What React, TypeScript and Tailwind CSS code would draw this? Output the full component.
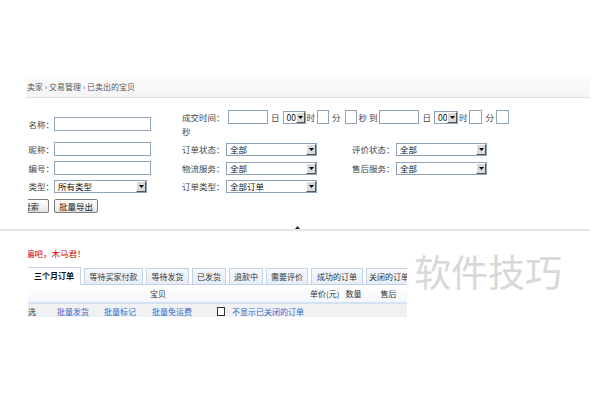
import React from "react";

const Inp = ({ cls }: { cls: string }) => (
  <span className={`inline-block h-[14px] shrink-0 border border-[#8fa3b8] bg-white ${cls}`} />
);

const Sel = ({ cls, text }: { cls: string; text: string }) => (
  <span
    className={`inline-flex h-[13px] shrink-0 items-center justify-between border border-[#8fa3b8] bg-white ${cls}`}
  >
    <span className="pl-[3px] leading-none text-[#111]">{text}</span>
    <span className="flex h-[11px] w-[10px] items-center justify-center border border-b-[#555] border-l-white border-r-[#555] border-t-white bg-[#dadada]">
      <svg width="5" height="3" viewBox="0 0 5 3">
        <path d="M0 0h5L2.5 3z" fill="#000" />
      </svg>
    </span>
  </span>
);

const Btn = ({ text, cls }: { text: string; cls?: string }) => (
  <span
    className={`inline-flex h-[14px] items-center rounded-[2px] border border-[#7c7c7c] bg-gradient-to-b from-white to-[#e4e4e4] leading-none text-[#222] ${cls ?? "px-[4px]"}`}
  >
    {text}
  </span>
);

const tabs: { t: string; w: string; active?: boolean }[] = [
  { t: "三个月订单", w: "w-[54px]", active: true },
  { t: "等待买家付款", w: "w-[59px]" },
  { t: "等待发货", w: "w-[43px]" },
  { t: "已发货", w: "w-[34px]" },
  { t: "退款中", w: "w-[34px]" },
  { t: "需要评价", w: "w-[42px]" },
  { t: "成功的订单", w: "w-[52px]" },
  { t: "关闭的订单", w: "w-[46px]" },
];

export default function App() {
  return (
    <div className="relative h-[400px] w-[600px] overflow-hidden bg-white font-['Noto_Sans_CJK_SC',sans-serif] text-[#444]">
      <div className="h-[77px]" />
      {/* breadcrumb */}
      <div className="ml-[26px] flex h-[21px] w-[564px] items-center overflow-hidden border-b border-[#e2e2e2] bg-gradient-to-b from-[#fcfcfc] to-[#f4f4f4] text-[8px] text-[#555]">
        <span className="ml-[1px] leading-none">卖家 › 交易管理 › 已卖出的宝贝</span>
      </div>

      {/* form */}
      <div className="ml-[28px] mt-[12px] w-[562px] overflow-hidden text-[8.5px] leading-none">
        <div className="-ml-[40px]">
          {/* row 1 */}
          <div className="flex h-[28px] items-center">
            <div className="w-[66px] shrink-0 text-right">宝贝名称：</div>
            <div className="w-[128px] shrink-0">
              <Inp cls="w-[97px]" />
            </div>
            <div className="flex flex-col">
              <div className="flex h-[14px] items-center">
                <span className="w-[46px] shrink-0">成交时间：</span>
                <Inp cls="w-[40px] h-[13px]" />
                <span className="ml-[3px]">日</span>
                <Sel cls="ml-[3px] w-[23px]" text="00" />
                <span className="ml-[1px]">时</span>
                <Inp cls="ml-[2px] w-[12px] h-[13px]" />
                <span className="ml-[3px]">分</span>
                <Inp cls="ml-[4px] w-[12px] h-[13px]" />
                <span className="ml-[2px] whitespace-nowrap">秒 到</span>
                <Inp cls="ml-[2px] w-[40px] h-[13px]" />
                <span className="ml-[3px]">日</span>
                <Sel cls="ml-[3px] w-[24px]" text="00" />
                <span className="ml-[1px]">时</span>
                <Inp cls="ml-[2px] w-[13px] h-[13px]" />
                <span className="ml-[3px]">分</span>
                <Inp cls="ml-[2px] w-[13px] h-[13px]" />
              </div>
              <div className="flex h-[14px] items-center">秒</div>
            </div>
          </div>
          {/* row 2 */}
          <div className="flex h-[22px] items-center">
            <div className="w-[66px] shrink-0 text-right">买家昵称：</div>
            <div className="w-[128px] shrink-0">
              <Inp cls="w-[97px]" />
            </div>
            <span className="w-[44px] shrink-0">订单状态：</span>
            <div className="w-[126px] shrink-0">
              <Sel cls="w-[91px]" text="全部" />
            </div>
            <span className="w-[44px] shrink-0">评价状态：</span>
            <Sel cls="w-[91px]" text="全部" />
          </div>
          {/* row 3 */}
          <div className="flex h-[16px] items-center">
            <div className="w-[66px] shrink-0 text-right">订单编号：</div>
            <div className="w-[128px] shrink-0">
              <Inp cls="w-[97px]" />
            </div>
            <span className="w-[44px] shrink-0">物流服务：</span>
            <div className="w-[126px] shrink-0">
              <Sel cls="w-[91px]" text="全部" />
            </div>
            <span className="w-[44px] shrink-0">售后服务：</span>
            <Sel cls="w-[91px]" text="全部" />
          </div>
          {/* row 4 */}
          <div className="flex h-[20px] items-center">
            <div className="w-[66px] shrink-0 text-right">宝贝类型：</div>
            <div className="w-[128px] shrink-0">
              <Sel cls="w-[93px]" text="所有类型" />
            </div>
            <span className="w-[44px] shrink-0">订单类型：</span>
            <Sel cls="w-[91px]" text="全部订单" />
          </div>
          {/* row 5 */}
          <div className="flex h-[20px] items-center">
            <div className="flex w-[66px] shrink-0 justify-end pr-[5px]">
              <Btn text="搜索" cls="pl-[8px] pr-[9px]" />
            </div>
            <Btn text="批量导出" />
          </div>
        </div>
      </div>

      {/* divider */}
      <div className="flex h-[24px] items-center">
        <div className="flex w-[590px] flex-col items-center">
          <svg width="5" height="3" viewBox="0 0 5 3" className="ml-[4px]">
            <path d="M0 3h5L2.5 0z" fill="#222" />
          </svg>
          <div className="h-[2px] w-full bg-[#e6e6e6]" />
        </div>
      </div>

      {/* red note */}
      <div className="ml-[28px] flex h-[27px] w-[400px] items-center overflow-hidden text-[8.5px] leading-none text-[#d40000]">
        <span className="-ml-[2px]">骗吧，木马君！</span>
      </div>

      {/* table */}
      <div className="ml-[28px] w-[379px] overflow-hidden text-[8px] leading-none">
        <div className="flex h-[18px] items-end gap-[3px] border-b border-[#c3d3e6]">
          <div className="-ml-[4px]" />
          {tabs.map((t) =>
            t.active ? (
              <div
                key={t.t}
                className={`-mb-px flex h-[18px] shrink-0 items-center justify-center border border-b-white border-[#c3d3e6] bg-white font-bold text-[#111] ${t.w}`}
              >
                {t.t}
              </div>
            ) : (
              <div
                key={t.t}
                className={`-mb-px flex h-[17px] shrink-0 items-center justify-center border border-[#c3d3e6] bg-gradient-to-b from-[#f6f9fc] to-[#e6edf6] text-[#333] ${t.w}`}
              >
                {t.t}
              </div>
            )
          )}
        </div>
        <div className="flex h-[19px] items-center border-b-2 border-[#d3e1f0] bg-gradient-to-b from-white to-[#f3f7fb] text-[#333]">
          <div className="w-[260px] shrink-0 text-center">宝贝</div>
          <div className="ml-[22px]">单价(元)</div>
          <div className="ml-[6px]">数量</div>
          <div className="ml-[19px]">售后</div>
        </div>
        <div className="flex h-[13px] items-start overflow-hidden bg-[#eff1f3] pt-[4px]">
          <span className="-ml-[8px] text-[#333]">全选</span>
          <span className="ml-[21px] text-[#3366cc]">批量发货</span>
          <span className="ml-[15px] text-[#3366cc]">批量标记</span>
          <span className="ml-[16px] text-[#3366cc]">批量免运费</span>
          <span className="ml-[25px] mt-[-1px] inline-block h-[9px] w-[8px] border border-[#333] bg-white" />
          <span className="ml-[7px] text-[#3366cc]">不显示已关闭的订单</span>
        </div>
      </div>

      {/* watermark */}
      <div className="absolute left-[414px] top-[253px] text-[37px] leading-none text-[#d8d8d8]">
        软件技巧
      </div>
    </div>
  );
}
